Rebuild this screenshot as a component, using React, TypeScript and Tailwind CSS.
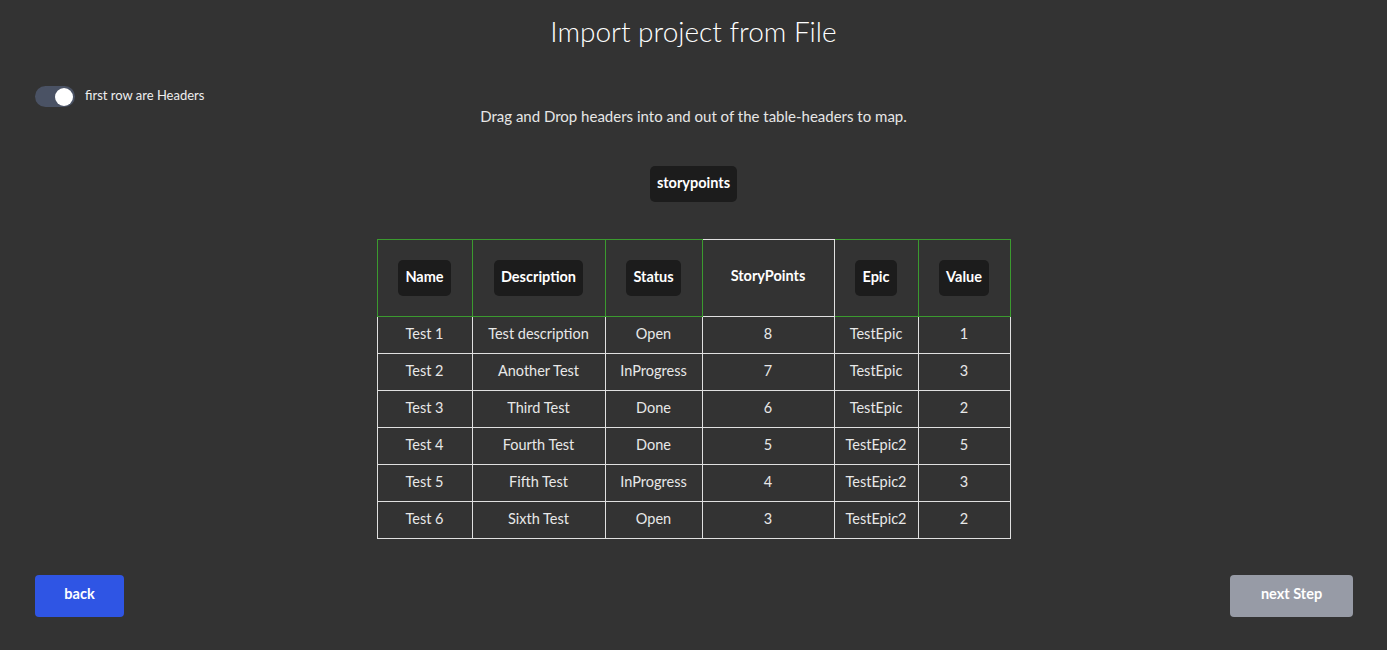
import React from "react";

const rows = [
  ["Test 1", "Test description", "Open", "8", "TestEpic", "1"],
  ["Test 2", "Another Test", "InProgress", "7", "TestEpic", "3"],
  ["Test 3", "Third Test", "Done", "6", "TestEpic", "2"],
  ["Test 4", "Fourth Test", "Done", "5", "TestEpic2", "5"],
  ["Test 5", "Fifth Test", "InProgress", "4", "TestEpic2", "3"],
  ["Test 6", "Sixth Test", "Open", "3", "TestEpic2", "2"],
];

const headers: { label: string; chip: boolean; w: string }[] = [
  { label: "Name", chip: true, w: "w-[95px]" },
  { label: "Description", chip: true, w: "w-[133px]" },
  { label: "Status", chip: true, w: "w-[97px]" },
  { label: "StoryPoints", chip: false, w: "w-[132px]" },
  { label: "Epic", chip: true, w: "w-[84px]" },
  { label: "Value", chip: true, w: "w-[92px]" },
];

function Chip({ children }: { children: React.ReactNode }) {
  return (
    <span className="inline-flex h-[36px] items-center rounded-[5px] bg-[#1c1c1c] px-[7px] pb-[3px] text-[14.5px] font-bold text-white">
      {children}
    </span>
  );
}

export default function App() {
  return (
    <div className="flex min-h-[650px] flex-col bg-[#333333] font-['Lato',sans-serif] text-[#eeeeee]">
      <h1 className="pt-[15px] text-center text-[28px] font-light leading-[33px] text-white">
        Import project from File
      </h1>

      <div className="mt-[38px] flex h-[21px] items-center pl-[35px]">
        <div className="flex h-[21px] w-[40px] items-center justify-end rounded-full bg-[#4a5264] pr-[2px]">
          <div className="h-[18px] w-[18px] rounded-full bg-white" />
        </div>
        <span className="ml-[10px] pb-[2px] text-[13px] leading-[17px] text-[#eeeeee]">first row are Headers</span>
      </div>

      <p className="pb-[1px] text-center text-[15px] leading-[19px] text-[#e6e6e6]">
        Drag and Drop headers into and out of the table-headers to map.
      </p>

      <div className="mt-[39px] flex justify-center">
        <Chip>storypoints</Chip>
      </div>

      <div className="mt-[37px] flex justify-center">
        <table className="border-collapse text-[14.5px] text-[#e8e8e8]">
          <thead>
            <tr>
              {headers.map((h) => (
                <th
                  key={h.label}
                  className={`${h.w} h-[77px] border p-0 text-center align-middle ${
                    h.chip ? "border-[#3b9a2f]" : "border-[#e0e0e0]"
                  }`}
                >
                  {h.chip ? (
                    <Chip>{h.label}</Chip>
                  ) : (
                    <span className="relative top-[-2px] text-[14.5px] font-bold text-white">{h.label}</span>
                  )}
                </th>
              ))}
            </tr>
          </thead>
          <tbody>
            {rows.map((r, i) => (
              <tr key={i}>
                {r.map((c, j) => (
                  <td
                    key={j}
                    className="h-[37px] border border-[#e0e0e0] p-0 pb-[3px] text-center align-middle"
                  >
                    {c}
                  </td>
                ))}
              </tr>
            ))}
          </tbody>
        </table>
      </div>

      <div className="mt-[36px] flex justify-between pl-[35px] pr-[34px]">
        <button className="h-[42px] w-[89px] rounded-[4px] bg-[#2f55e4] pb-[4px] text-[14.5px] font-bold text-white">
          back
        </button>
        <button className="h-[42px] w-[123px] rounded-[4px] bg-[#979ba6] pb-[4px] text-[14.5px] font-bold text-white">
          next Step
        </button>
      </div>
    </div>
  );
}
